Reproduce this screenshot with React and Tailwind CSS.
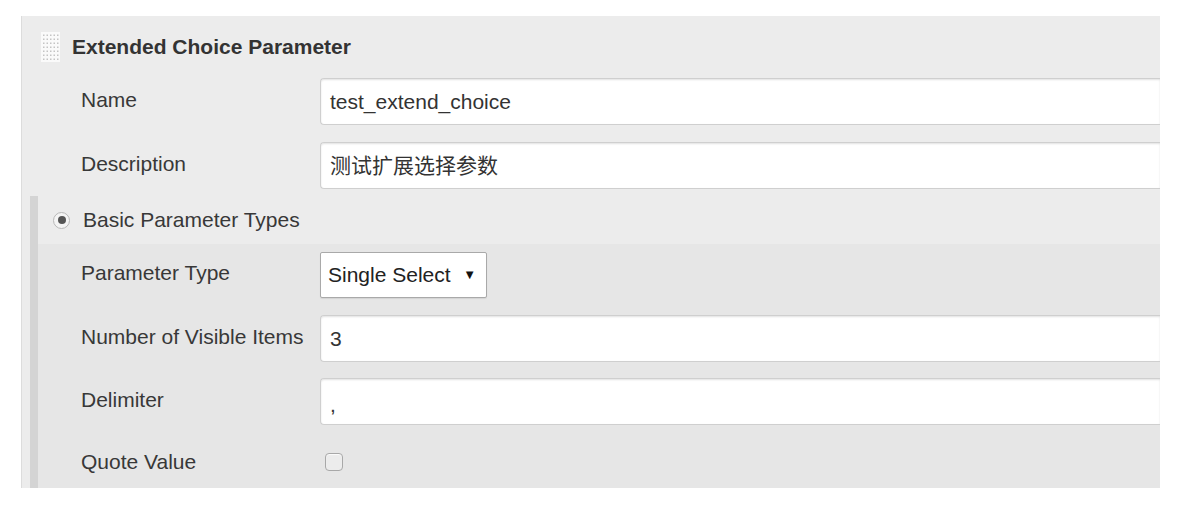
const font = { fontFamily: '"Liberation Sans", Arial, "Noto Sans CJK SC", sans-serif' };

function Grip() {
  const dots = [];
  for (let r = 0; r < 7; r++) {
    for (let c = 0; c < 5; c++) {
      dots.push(<rect key={`${r}-${c}`} x={2 + c * 3.5} y={2.5 + r * 4} width="1.5" height="1.5" fill="#c4c4c4" />);
    }
  }
  return (
    <svg width="19" height="30" viewBox="0 0 19 30" className="shrink-0">
      <rect width="19" height="30" fill="#fafafa" />
      {dots}
    </svg>
  );
}

function TextField({ label, value }) {
  return (
    <div className="flex h-[47px]">
      <div className="w-[298px] shrink-0 pl-[59px] pt-[6px] text-[21px] text-[#383838]">{label}</div>
      <div className="flex h-[47px] flex-1 items-center rounded-l-[4px] border border-r-0 border-[#cfcfcf] bg-white pl-[9px] text-[21px] text-[#333] shadow-[inset_0_1px_2px_rgba(0,0,0,0.12)]">
        {value}
      </div>
    </div>
  );
}

export default function App() {
  return (
    <div className="h-[518px] w-[1194px] bg-white pt-[16px] pl-[21px]" style={font}>
      <div className="flex h-[472px] w-[1139px] flex-col overflow-hidden border-l border-[#dcdcdc] bg-[#ececec]">
        {/* Header */}
        <div className="flex h-[62px] shrink-0 items-center gap-[12px] pl-[19px]">
          <Grip />
          <span className="text-[21px] font-bold text-[#333]">Extended Choice Parameter</span>
        </div>

        {/* Top fields */}
        <div className="flex flex-col gap-[17px]">
          <TextField label="Name" value="test_extend_choice" />
          <TextField label="Description" value="测试扩展选择参数" />
        </div>

        {/* Basic parameter types */}
        <div className="mt-[7px] flex flex-1 pl-[8px]">
          <div className="w-[8px] shrink-0 bg-[#d4d4d4]" />
          <div className="flex flex-1 flex-col">
            <div className="flex h-[48px] shrink-0 items-center pl-[15px]">
              <span className="flex h-[17px] w-[17px] items-center justify-center rounded-full border border-[#b8b8b8] bg-[#f4f4f4]">
                <span className="h-[8px] w-[8px] rounded-full bg-[#555]" />
              </span>
              <span className="ml-[13px] text-[21px] text-[#383838]">Basic Parameter Types</span>
            </div>

            <div className="flex flex-1 flex-col gap-[16px] bg-[#e6e6e6] pt-[8px]">
              <div className="flex h-[47px]">
                <div className="w-[282px] shrink-0 pl-[43px] pt-[5px] text-[21px] text-[#383838]">Parameter Type</div>
                <div className="flex h-[46px] w-[167px] items-center justify-between rounded-[2px] border border-[#a9a9a9] bg-white pl-[7px] pr-[10px] text-[21px] text-[#222] shadow-[0_1px_1px_rgba(0,0,0,0.08)]">
                  <span>Single Select</span>
                  <span className="text-[13px] text-[#111]">▼</span>
                </div>
              </div>

              <div className="flex h-[47px]">
                <div className="w-[282px] shrink-0 pl-[43px] pt-[6px] text-[21px] text-[#383838]">Number of Visible Items</div>
                <div className="flex h-[47px] flex-1 items-center rounded-l-[4px] border border-r-0 border-[#cfcfcf] bg-white pl-[9px] text-[21px] text-[#333] shadow-[inset_0_1px_2px_rgba(0,0,0,0.12)]">
                  3
                </div>
              </div>

              <div className="flex h-[47px]">
                <div className="w-[282px] shrink-0 pl-[43px] pt-[6px] text-[21px] text-[#383838]">Delimiter</div>
                <div className="flex h-[47px] flex-1 items-center rounded-l-[4px] border border-r-0 border-[#cfcfcf] bg-white pl-[9px] pt-[6px] text-[21px] text-[#333] shadow-[inset_0_1px_2px_rgba(0,0,0,0.12)]">
                  ,
                </div>
              </div>

              <div className="flex h-[47px] items-center">
                <div className="-mt-[6px] w-[282px] shrink-0 pl-[43px] text-[21px] text-[#383838]">Quote Value</div>
                <span className="-mt-[5px] ml-[5px] h-[18px] w-[18px] rounded-[4px] border border-[#a8a8a8] bg-[#ececec] shadow-[inset_0_1px_1px_rgba(255,255,255,0.8)]" />
              </div>
            </div>
          </div>
        </div>
      </div>
    </div>
  );
}
